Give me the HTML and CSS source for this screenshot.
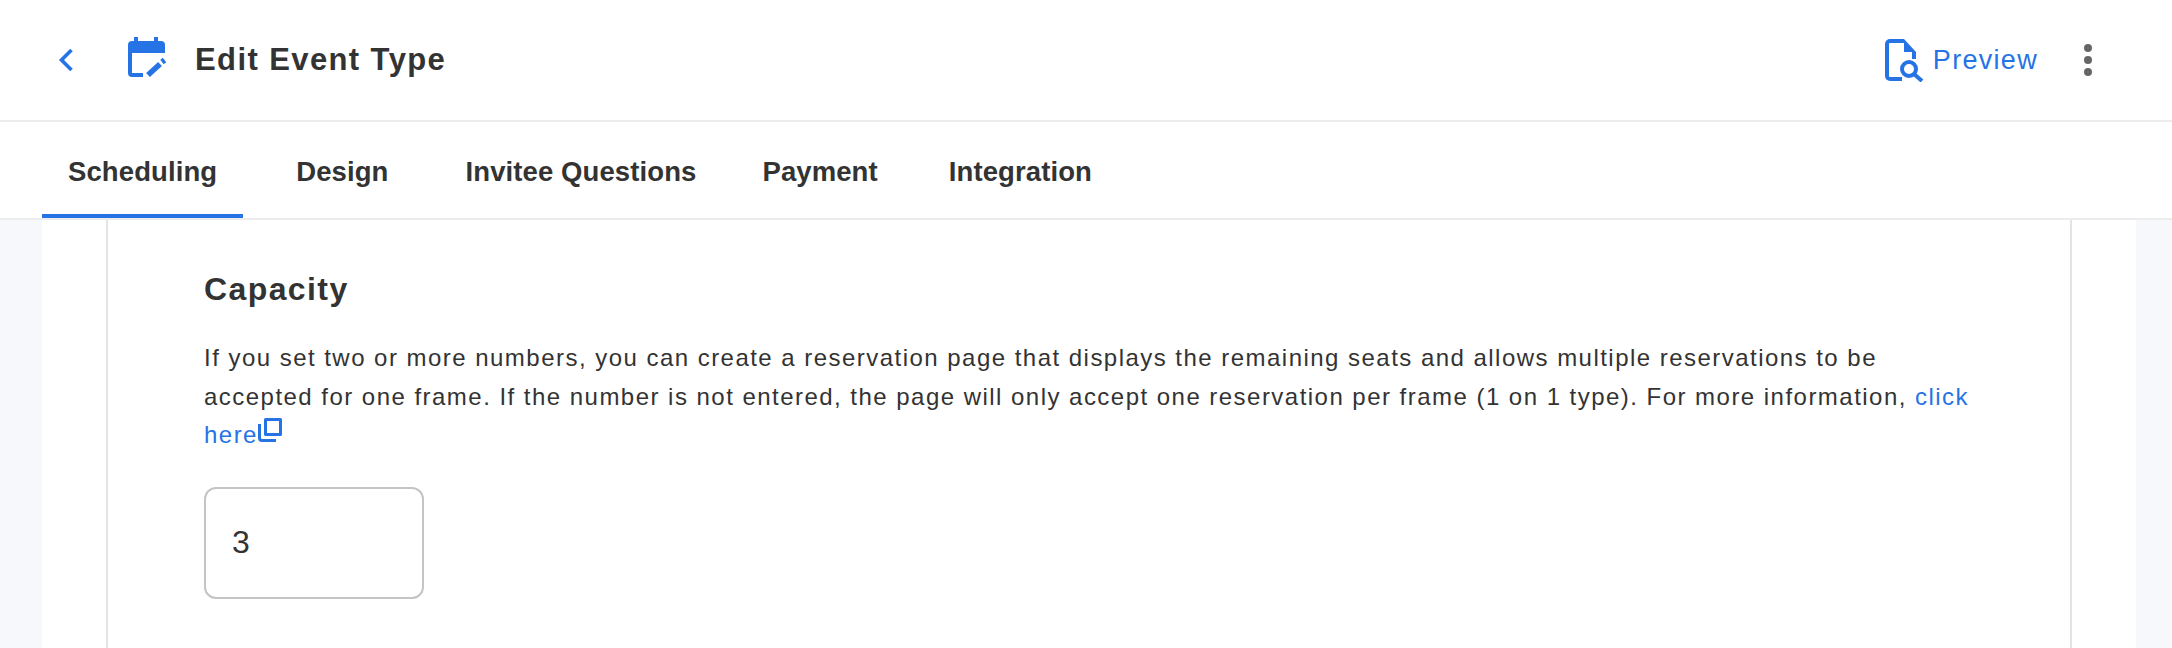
FILE: index.html
```html
<!DOCTYPE html>
<html lang="en">
<head>
    <meta charset="UTF-8">
    <title>Edit Event Type</title>
    <link rel="stylesheet" href="styles.css">
</head>
<body>
<div class="main">
    <div class="header">
        <a class="back-link" aria-label="Back">
            <svg width="16" height="24" viewBox="0 0 16 24"><path d="M13.5 2 3.5 12l10 10" fill="none" stroke="#2673e6" stroke-width="3.600"/></svg>
        </a>
        <svg class="title-icon" width="40" height="40" viewBox="0 0 40 40">
            <path d="M4 4H33a4 4 0 0 1 4 4v8H0V8a4 4 0 0 1 4-4z" fill="#2673e6"/>
            <path d="M6 0h4v5H6zM26 0h4v5h-4z" fill="#2673e6"/>
            <path d="M0 16h4v20h11v4H4a4 4 0 0 1-4-4z" fill="#2673e6"/>
            <path d="M20 38 32 27" fill="none" stroke="#2673e6" stroke-width="5.5"/>
            <path d="M34 25l2.500-2" fill="none" stroke="#2673e6" stroke-width="5.500"/>
        </svg>
        <div class="title">Edit Event Type</div>
        <a class="preview-link">
            <svg width="40" height="44" viewBox="0 0 40 44">
                <path d="M19 3H5a3 3 0 0 0-3 3v32a3 3 0 0 0 3 3h12M29 14v7" fill="none" stroke="#2673e6" stroke-width="4"/>
                <path d="M19 1l12 13H19z" fill="#2673e6"/>
                <circle cx="24" cy="31" r="7" fill="none" stroke="#2673e6" stroke-width="4"/>
                <path d="M29 36l8 7" fill="none" stroke="#2673e6" stroke-width="4"/>
            </svg>
            <span>Preview</span>
        </a>
        <div class="kebab"><i></i><i></i><i></i></div>
    </div>

    <div class="tabs">
        <a class="tab active">Scheduling</a>
        <a class="tab tab-design">Design</a>
        <a class="tab tab-questions">Invitee Questions</a>
        <a class="tab tab-payment">Payment</a>
        <a class="tab tab-integration">Integration</a>
    </div>

    <div class="page-content">
        <div class="card">
            <div class="section">
                <h2>Capacity</h2>
                <p>
                    If you set two or more numbers, you can create a reservation page that displays the remaining seats and allows multiple reservations to be
                    accepted for one frame. If the number is not entered, the page will only accept one reservation per frame (1 on 1 type). For more information,
                    <a class="help-link">click</a>
                    <a class="help-link">here<svg width="24" height="24" viewBox="0 0 24 24"><path d="M7.500 1.500h15v15h-15z" fill="none" stroke="#2673e6" stroke-width="3" stroke-linejoin="round"/><path d="M1.500 6v14a2.500 2.500 0 0 0 2.500 2.500h14" fill="none" stroke="#2673e6" stroke-width="3"/></svg></a>
                </p>
                <input class="number-input" type="text" value="3">
            </div>
        </div>
    </div>
</div>
</body>
</html>
```
FILE: styles.css
```css
html, body {
    height: 100%;
    margin: 0;
    padding: 0;
    overflow: hidden;
}

body {
    font-family: "Liberation Sans", Arial, sans-serif;
    color: #333;
}

.main {
    display: flex;
    flex-direction: column;
    height: 100%;
}

.header {
    display: flex;
    align-items: center;
    height: 120px;
    padding: 0 80px 0 58px;
    border-bottom: 2px solid #ececec;
    background: #fff;
    flex-shrink: 0;
}

.back-link {
    display: flex;
    margin-right: 54px;
}

.title-icon {
    margin-right: 27px;
    margin-top: -6px;
}

.title {
    flex: 1;
    font-size: 31px;
    font-weight: bold;
    letter-spacing: 1.4px;
}

.preview-link {
    display: flex;
    align-items: center;
    color: #2673e6;
    font-size: 27px;
    letter-spacing: 1.3px;
}

.preview-link span {
    margin-left: 8px;
}

.kebab {
    display: flex;
    flex-direction: column;
    gap: 4px;
    margin-left: 46px;
}

.kebab i {
    display: block;
    width: 8px;
    height: 8px;
    border-radius: 50%;
    background: #666;
}

.tabs {
    display: flex;
    height: 96px;
    padding-left: 42px;
    border-bottom: 2px solid #ececec;
    background: #fff;
    flex-shrink: 0;
}

.tab {
    display: flex;
    align-items: center;
    height: 96px;
    padding: 4px 26px 0;
    box-sizing: border-box;
    font-size: 27.500px;
    font-weight: bold;
    letter-spacing: 0.1px;
}

.tab.active {
    border-bottom: 4px solid #2673e6;
    padding-top: 8px;
}

.tab-design {
    margin-left: 27px;
}

.tab-questions {
    margin-left: 25px;
}

.tab-payment {
    margin-left: 14px;
}

.tab-integration {
    margin-left: 19px;
}

.page-content {
    flex: 1;
    padding: 0 36px 0 42px;
    background: #f7f8fc;
    overflow: hidden;
}

.card {
    height: 100%;
    padding: 0 64px;
    background: #fff;
}

.section {
    height: 100%;
    padding: 51px 96px 0;
    box-sizing: border-box;
    border-left: 2px solid #e4e4e4;
    border-right: 2px solid #e4e4e4;
}

.section h2 {
    margin: 0 0 31px;
    font-size: 32px;
    font-weight: bold;
    letter-spacing: 1.4px;
}

.section p {
    margin: 0 0 32px;
    font-size: 24px;
    line-height: 38.500px;
    letter-spacing: 1.470px;
}

.help-link {
    color: #2673e6;
}

.help-link svg {
    vertical-align: 1px;
}

.number-input {
    display: block;
    width: 220px;
    height: 112px;
    padding: 0 26px;
    box-sizing: border-box;
    border: 2px solid #c4c4c4;
    border-radius: 12px;
    font-family: inherit;
    font-size: 32px;
    color: #333;
}
```
